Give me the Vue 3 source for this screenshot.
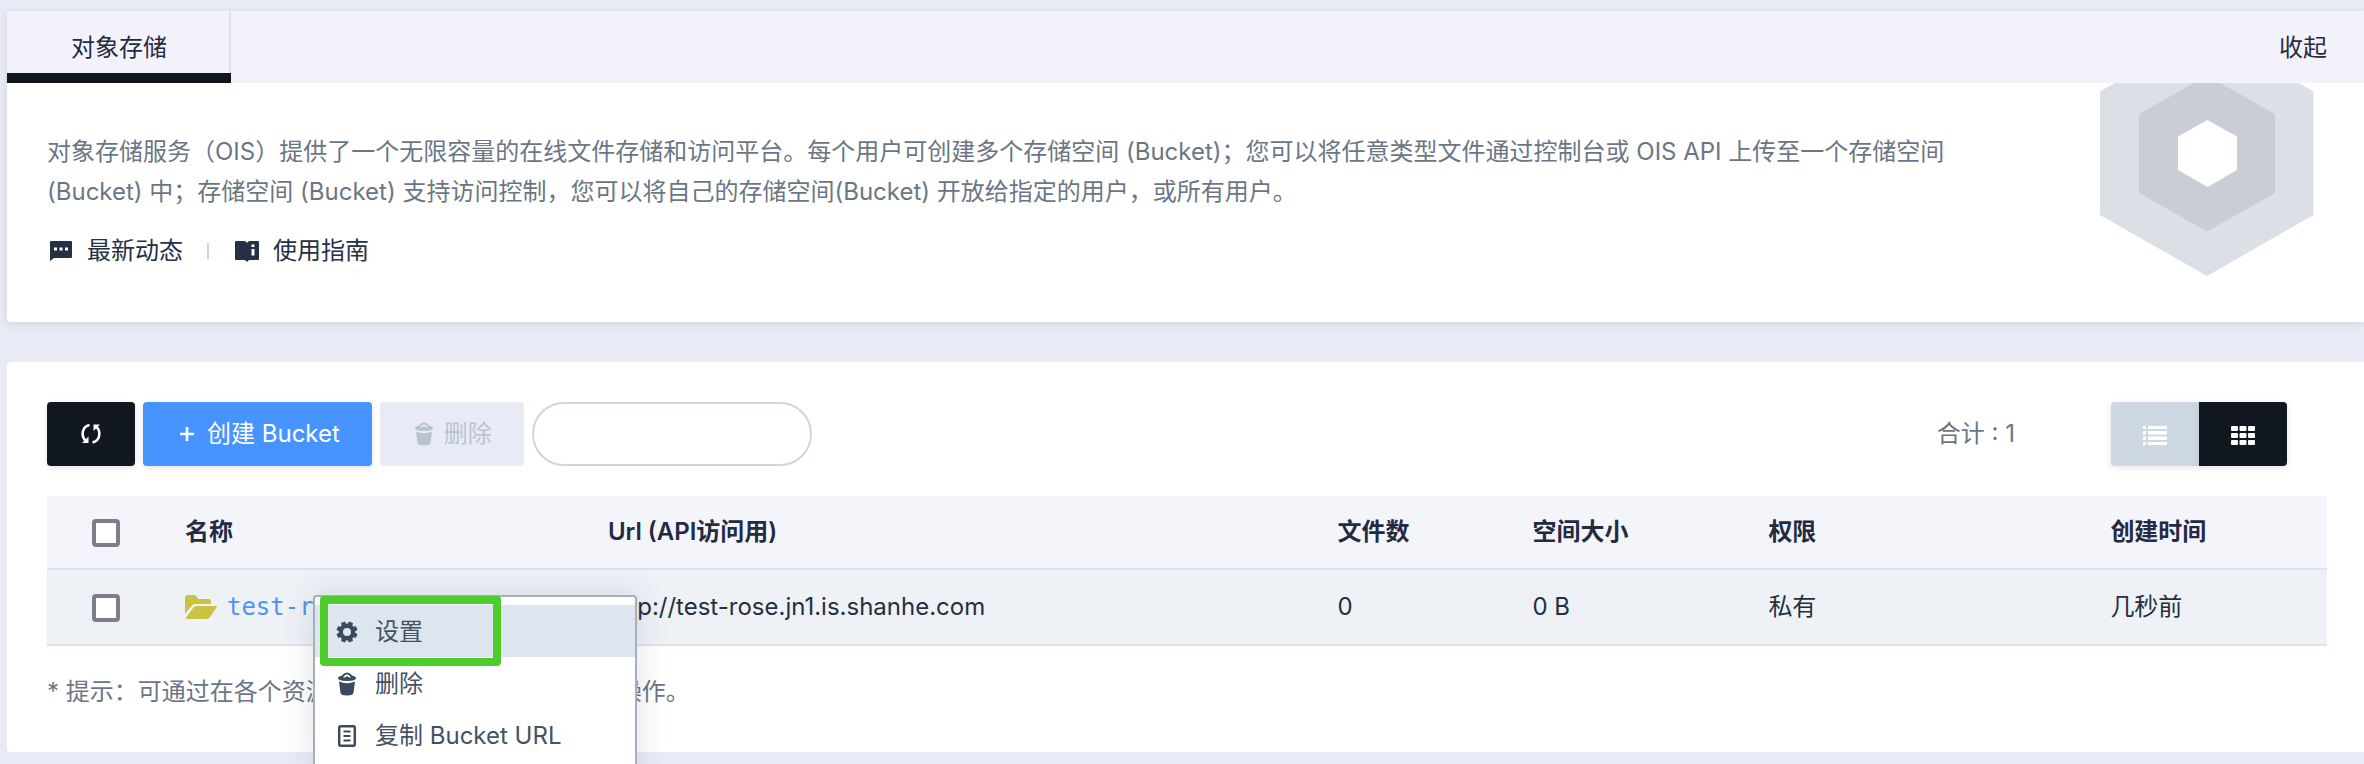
<script setup>
import { ref } from 'vue'

const columns = [
  { key: 'name', label: '名称' },
  { key: 'url', label: 'Url (API访问用)' },
  { key: 'files', label: '文件数' },
  { key: 'size', label: '空间大小' },
  { key: 'acl', label: '权限' },
  { key: 'created', label: '创建时间' },
]

const buckets = [
  {
    name: 'test-rose',
    url: 'http://test-rose.jn1.is.shanhe.com',
    files: '0',
    size: '0 B',
    acl: '私有',
    created: '几秒前',
  },
]

const keyword = ref('')
const selected = ref([])
const teeth = [0, 45, 90, 135, 180, 225, 270, 315]
</script>

<template>
  <main class="page">
    <section class="card intro">
      <header class="tabs">
        <button type="button" class="tab">对象存储</button>
        <button type="button" class="collapse">收起</button>
      </header>
      <div class="intro-body">
        <div class="intro-text">
          <p class="description">
            对象存储服务（OIS）提供了一个无限容量的在线文件存储和访问平台。每个用户可创建多个存储空间 (Bucket)；您可以将任意类型文件通过控制台或 OIS API 上传至一个存储空间 (Bucket) 中；存储空间 (Bucket) 支持访问控制，您可以将自己的存储空间(Bucket) 开放给指定的用户，或所有用户。
          </p>
          <nav class="links">
            <a href="#news" class="link">
              <svg class="link-icon" viewBox="0 0 28 28" aria-hidden="true">
                <path fill="currentColor" fill-rule="evenodd" d="M4 4h20a1 1 0 0 1 1 1v15a1 1 0 0 1-1 1H7l-4 3V5a1 1 0 0 1 1-1zM7 10.500v3h3v-3zM12.500 10.500v3h3v-3zM18 10.500v3h3v-3z" />
              </svg>
              最新动态
            </a>
            <span class="divider"></span>
            <a href="#guide" class="link">
              <svg class="link-icon" viewBox="0 0 28 28" aria-hidden="true">
                <path fill="currentColor" fill-rule="evenodd" d="M2 5q0-1 1-1h8q2 0 3 2 1-2 3-2h8q1 0 1 1v17q0 1-1 1h-9l-2 2-2-2H3q-1 0-1-1zM18.500 7.500v2.500h3V7.500zM18.500 12v6.500h3V12z" />
              </svg>
              使用指南
            </a>
          </nav>
        </div>
        <svg class="emblem" viewBox="0 0 214 193" aria-hidden="true">
          <path fill="#dbe0e7" d="M107-53 213.500 8.500V132L107 193 0 132V8.500z" />
          <path fill="#c9cdd6" d="M107-7.500 175 31v79l-68 38.500L39 110V31z" />
          <path fill="#fff" d="M107.500 37 137 53.500V87l-29.500 17L78 87V53.500z" />
        </svg>
      </div>
    </section>

    <section class="card list">
      <div class="toolbar">
        <button type="button" class="btn dark" aria-label="刷新">
          <svg class="icon" viewBox="0 0 24 24" aria-hidden="true">
            <g fill="none" stroke="currentColor" stroke-width="2.600">
              <path d="M10.500 3C3.500 4.500 1 13.500 7 19" />
              <path d="M13.500 20.500C20.500 19 23 10 17 4.500" />
            </g>
            <path fill="currentColor" d="M3 21h6.500v-6.500zM21 2.500h-6.500V9z" />
          </svg>
        </button>
        <button type="button" class="btn primary">
          <svg class="icon" viewBox="0 0 24 24" aria-hidden="true">
            <path fill="none" stroke="currentColor" stroke-width="2.600" d="M12 5v14M5 12h14" />
          </svg>
          创建 Bucket
        </button>
        <button type="button" class="btn disabled" disabled>
          <svg class="icon" viewBox="0 0 24 24" aria-hidden="true">
            <path fill="currentColor" fill-rule="evenodd" d="M3 6Q3 4.500 6.500 3.700 9.500.5 12 .5t5.500 3.200Q21 4.500 21 6 21 9 12 9T3 6zM8 5.300q2 1 4-1.300 2 2.300 4 1.300Q13.500 2.200 12 2.200T8 5.300z" />
            <path fill="currentColor" d="M4 9.500q8 3.500 16 0L18.500 21q-.5 2.500-6.500 2.500T5.500 21z" />
          </svg>
          删除
        </button>
        <input v-model="keyword" type="text" class="search" aria-label="搜索" />
        <span class="total">合计 : 1</span>
        <div class="switch">
          <button type="button" class="btn pale" aria-label="列表视图">
            <svg class="icon" viewBox="0 0 24 24" aria-hidden="true">
              <path fill="currentColor" d="M0 4h3v3H0zM5 4h19v3H5zM0 9h3v3.500H0zM5 9h19v3.500H5zM0 14.500h3V18H0zM5 14.500h19V18H5zM0 20h3v3H0zM5 20h19v3H5z" />
            </svg>
          </button>
          <button type="button" class="btn dark" aria-label="网格视图">
            <svg class="icon" viewBox="0 0 24 24" aria-hidden="true">
              <g fill="currentColor">
                <template v-for="y in [4, 11, 18]" :key="y">
                  <rect v-for="x in [0, 8.500, 17]" :key="x" :x="x" :y="y" width="7" height="5" rx="1" />
                </template>
              </g>
            </svg>
          </button>
        </div>
      </div>

      <table class="table">
        <colgroup>
          <col class="col-check" />
          <col v-for="c in columns" :key="c.key" :class="'col-' + c.key" />
        </colgroup>
        <thead>
          <tr>
            <th class="check"><input type="checkbox" class="box" aria-label="全选" /></th>
            <th v-for="c in columns" :key="c.key" scope="col">{{ c.label }}</th>
          </tr>
        </thead>
        <tbody>
          <tr v-for="b in buckets" :key="b.name">
            <td class="check">
              <input v-model="selected" type="checkbox" class="box" :value="b.name" :aria-label="b.name" />
            </td>
            <td>
              <a href="#bucket" class="bucket">
                <svg class="folder" viewBox="0 0 32 24" aria-hidden="true">
                  <path d="M0 19V2.500Q0 0 2.500 0h6Q11 0 11.500 1.500L13 4h10.500Q26 4 26 6.500V9H10Q8 9 7 10.500z" />
                  <path d="M1 22.500 8.500 12.500q1-1.500 3-1.500H31q1.500 0 .5 1.500L25 22q-1.500 2-4 2H2Q0 24 1 22.500z" />
                </svg>
                {{ b.name }}
              </a>
            </td>
            <td>{{ b.url }}</td>
            <td>{{ b.files }}</td>
            <td>{{ b.size }}</td>
            <td>{{ b.acl }}</td>
            <td>{{ b.created }}</td>
          </tr>
        </tbody>
      </table>

      <p class="note">* 提示：可通过在各个资源上点击「右键」来进行常用操作。</p>

      <div class="menu" role="menu">
        <button type="button" class="menu-item active" role="menuitem">
          <svg class="icon" viewBox="0 0 24 24" aria-hidden="true">
            <circle cx="12" cy="12" r="6" fill="none" stroke="currentColor" stroke-width="4" />
            <path
              v-for="t in teeth"
              :key="t"
              fill="currentColor"
              d="M9 5.500 10 1.500h4l1 4z"
              :transform="`rotate(${t + 22.5} 12 12)`"
            />
          </svg>
          设置
        </button>
        <button type="button" class="menu-item" role="menuitem">
          <svg class="icon" viewBox="0 0 24 24" aria-hidden="true">
            <path fill="currentColor" fill-rule="evenodd" d="M3 6Q3 4.500 6.500 3.700 9.500.5 12 .5t5.500 3.200Q21 4.500 21 6 21 9 12 9T3 6zM8 5.300q2 1 4-1.300 2 2.300 4 1.300Q13.500 2.200 12 2.200T8 5.300z" />
            <path fill="currentColor" d="M4 9.500q8 3.500 16 0L18.500 21q-.5 2.500-6.500 2.500T5.500 21z" />
          </svg>
          删除
        </button>
        <button type="button" class="menu-item" role="menuitem">
          <svg class="icon" viewBox="0 0 24 24" aria-hidden="true">
            <g fill="none" stroke="currentColor" stroke-width="2.500">
              <rect x="4.200" y="2.200" width="15.600" height="19.600" rx="1.500" />
              <path stroke-width="2" d="M8.500 7.500h7M8.500 12h7M8.500 16.500h7" />
            </g>
          </svg>
          复制 Bucket URL
        </button>
        <span class="highlight"></span>
      </div>
    </section>
  </main>
</template>

<style>
body {
  margin: 0;
  background: #e8ebf5;
}
</style>

<style scoped>
.page {
  box-sizing: border-box;
  min-height: 100vh;
  padding: 11px 0 12px 7px;
  display: flex;
  flex-direction: column;
  gap: 40px;
  overflow: hidden;
  background: #e8ebf5;
  color: #242e42;
  font-family: Inter, "Noto Sans CJK SC", sans-serif;
  font-size: 24px;
  line-height: 40px;
}

button,
input {
  font: inherit;
  color: inherit;
  margin: 0;
  box-sizing: border-box;
}

button {
  border: 0;
  background: none;
  padding: 0;
  cursor: pointer;
}

p {
  margin: 0;
}

.card {
  background: #fff;
  border-radius: 4px 0 0 4px;
}

.intro {
  box-shadow: 0 2px 8px rgba(36, 46, 66, 0.12);
}

.tabs {
  display: flex;
  justify-content: space-between;
  height: 72px;
  padding-right: 37px;
  background: #f3f2fa;
  border-radius: 4px 0 0 0;
}

.tab {
  padding: 12px 62px 0 64px;
  border-right: 2px solid #dfe4ec;
  border-bottom: 10px solid #10171f;
  border-image: linear-gradient(#dfe4ec 62px, #10171f 62px) 0 2 10 0;
  color: #242a42;
}

.collapse {
  padding-top: 2px;
  color: #242a42;
}

.intro-body {
  display: flex;
  align-items: flex-start;
  gap: 110px;
  padding-right: 50px;
}

.intro-text {
  flex: 1;
  padding: 49px 0 51px 40px;
}

.description {
  color: #6b7685;
}

.links {
  display: flex;
  align-items: center;
  gap: 24px;
  margin-top: 19px;
}

.link {
  display: flex;
  align-items: center;
  gap: 12px;
  color: #253045;
  text-decoration: none;
}

.link-icon {
  width: 28px;
  height: 28px;
}

.divider {
  width: 2px;
  height: 16px;
  background: #d0d6df;
}

.emblem {
  flex: none;
  width: 214px;
  height: 193px;
  overflow: hidden;
}

.list {
  position: relative;
  padding: 40px 37px 40px 40px;
}

.toolbar {
  display: flex;
  align-items: center;
  gap: 8px;
  padding-right: 40px;
}

.icon {
  flex: none;
  width: 24px;
  height: 24px;
}

.btn {
  display: flex;
  align-items: center;
  gap: 8px;
  height: 64px;
  padding: 0 32px;
  border-radius: 4px;
  white-space: nowrap;
  box-shadow: 0 2px 6px rgba(36, 46, 66, 0.12);
}

.dark {
  background: #10171f;
  color: #fff;
}

.primary {
  background: #4793ff;
  color: #fff;
}

.disabled {
  background: #e8ebf5;
  color: #b9c4d1;
  box-shadow: none;
}

.pale {
  background: #cdd8e3;
  color: #fff;
}

.search {
  width: 280px;
  height: 64px;
  padding: 0 28px;
  border: 2px solid #cfd5e1;
  border-radius: 32px;
  background: #fff;
  outline: none;
}

.total {
  margin-left: auto;
  color: #6b7685;
}

.switch {
  display: flex;
  margin-left: 88px;
}

.switch .pale {
  border-radius: 4px 0 0 4px;
}

.switch .dark {
  border-radius: 0 4px 4px 0;
}

.table {
  width: 100%;
  margin-top: 30px;
  table-layout: fixed;
  border-collapse: separate;
  border-spacing: 0;
}

.col-check { width: 6.05%; }
.col-name { width: 18.55%; }
.col-url { width: 32%; }
.col-files { width: 8.55%; }
.col-size { width: 10.35%; }
.col-acl { width: 15%; }
.col-created { width: 9.5%; }

.table th,
.table td {
  padding: 0;
  border-bottom: 2px solid #dce3e9;
  text-align: left;
  white-space: nowrap;
}

.table th {
  height: 72px;
  background: #f3f5fa;
  color: #242a42;
  font-weight: 600;
}

.table td {
  height: 74px;
  background: #eef2f7;
  color: #252f3d;
}

.table .check {
  padding: 2px 0 0 45px;
}

.table th.check {
  height: 70px;
}

.table td.check {
  height: 72px;
}

.box {
  display: block;
  width: 28px;
  height: 28px;
  appearance: none;
  border: 4px solid #807c8c;
  border-radius: 4px;
  background: #fff;
}

.bucket {
  display: flex;
  align-items: center;
  gap: 10px;
  color: #4f94ee;
  font-family: "DejaVu Sans Mono", monospace;
  text-decoration: none;
}

.folder {
  width: 32px;
  height: 24px;
  fill: #cbc143;
}

.note {
  margin-top: 26px;
  color: #6b7685;
}

.menu {
  position: absolute;
  top: 233px;
  left: 306px;
  box-sizing: border-box;
  width: 324px;
  padding: 8px 0;
  border: 2px solid #a4b0bf;
  border-radius: 4px;
  background: #fff;
  box-shadow: 0 0 32px rgba(36, 46, 66, 0.14);
}

.menu-item {
  display: flex;
  align-items: center;
  gap: 16px;
  width: 100%;
  height: 52px;
  padding: 2px 20px 0;
  color: #465263;
}

.menu-item .icon {
  color: #3b4a5c;
}

.active {
  background: #dde5ee;
}

.highlight {
  position: absolute;
  top: -1px;
  left: 5px;
  box-sizing: border-box;
  width: 181px;
  height: 70px;
  border: 8px solid #4dcc2e;
  border-radius: 4px;
}
</style>
